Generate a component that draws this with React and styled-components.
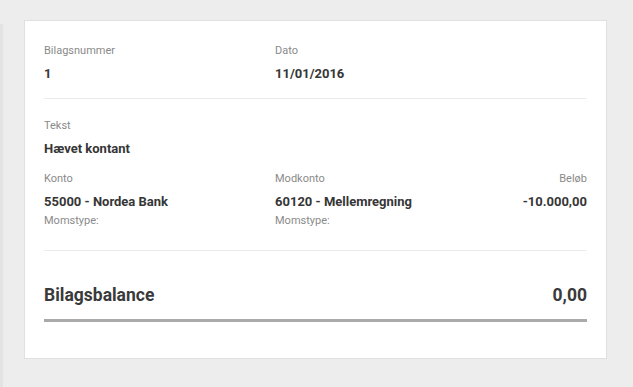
import React from 'react';
import styled, { createGlobalStyle } from 'styled-components';

const GlobalStyle = createGlobalStyle`
    html, body {
        margin: 0;
        padding: 0;
        background: #ededed;
        font-family: Roboto, "Liberation Sans", sans-serif;
    }
`;

const lines = [
    { konto: '55000 - Nordea Bank', modkonto: '60120 - Mellemregning', amount: '-10.000,00' },
];

const App = () => {
    return (
        <Page>
            <GlobalStyle />
            <Edge />
            <Card>
                <TopGrid>
                    <Field>
                        <Label>Bilagsnummer</Label>
                        <Value>1</Value>
                    </Field>
                    <Field>
                        <Label>Dato</Label>
                        <Value>11/01/2016</Value>
                    </Field>
                </TopGrid>
                <Divider top={15} />
                <Section>
                    <Field>
                        <Label>Tekst</Label>
                        <Value>Hævet kontant</Value>
                    </Field>
                    {lines.map((line, i) => (
                        <LineGrid key={i}>
                            <Field>
                                <Label>Konto</Label>
                                <Value>{line.konto}</Value>
                                <Sub>Momstype:</Sub>
                            </Field>
                            <Field>
                                <Label>Modkonto</Label>
                                <Value>{line.modkonto}</Value>
                                <Sub>Momstype:</Sub>
                            </Field>
                            <Field right>
                                <Label>Beløb</Label>
                                <Value>{line.amount}</Value>
                            </Field>
                        </LineGrid>
                    ))}
                </Section>
                <Divider top={21} />
                <Balance>
                    <span>Bilagsbalance</span>
                    <span>0,00</span>
                </Balance>
            </Card>
        </Page>
    );
};

const Page = styled.div`
    display: flex;
    height: 100vh;
    padding: 20px 26px 0 0;
    box-sizing: border-box;
`;

const Edge = styled.div`
    width: 3px;
    margin-top: 4px;
    background: #e3e3e3;
    margin-right: 21px;
`;

const Card = styled.div`
    width: 583px;
    height: 339px;
    box-sizing: border-box;
    background: #fff;
    border: 1px solid #e0e0e0;
    padding: 22px 19px 0 19px;
`;

const TopGrid = styled.div`
    display: grid;
    grid-template-columns: 231px 1fr;
`;

const LineGrid = styled.div`
    display: grid;
    grid-template-columns: 231px 1fr auto;
    margin-top: 13px;
`;

const Section = styled.div`
    padding-top: 1px;
`;

const Field = styled.div`
    display: flex;
    flex-direction: column;
    align-items: ${p => (p.right ? 'flex-end' : 'flex-start')};
`;

const Label = styled.div`
    font-size: 11px;
    line-height: 16px;
    color: #8a8a8a;
`;

const Value = styled.div`
    font-size: 13px;
    line-height: 18px;
    font-weight: 700;
    color: #363636;
    margin-top: 6px;
`;

const Sub = styled.div`
    font-size: 11px;
    line-height: 16px;
    color: #8a8a8a;
    margin-top: 2px;
`;

const Divider = styled.div`
    height: 1px;
    background: #ececec;
    margin: ${p => p.top}px 0 18px;
`;

const Balance = styled.div`
    display: flex;
    justify-content: space-between;
    align-items: flex-end;
    font-size: 17.5px;
    line-height: 22px;
    font-weight: 700;
    color: #3a3a3a;
    margin-top: 33px;
    padding-bottom: 13px;
    border-bottom: 3px solid #aaa;
`;

export default App;
